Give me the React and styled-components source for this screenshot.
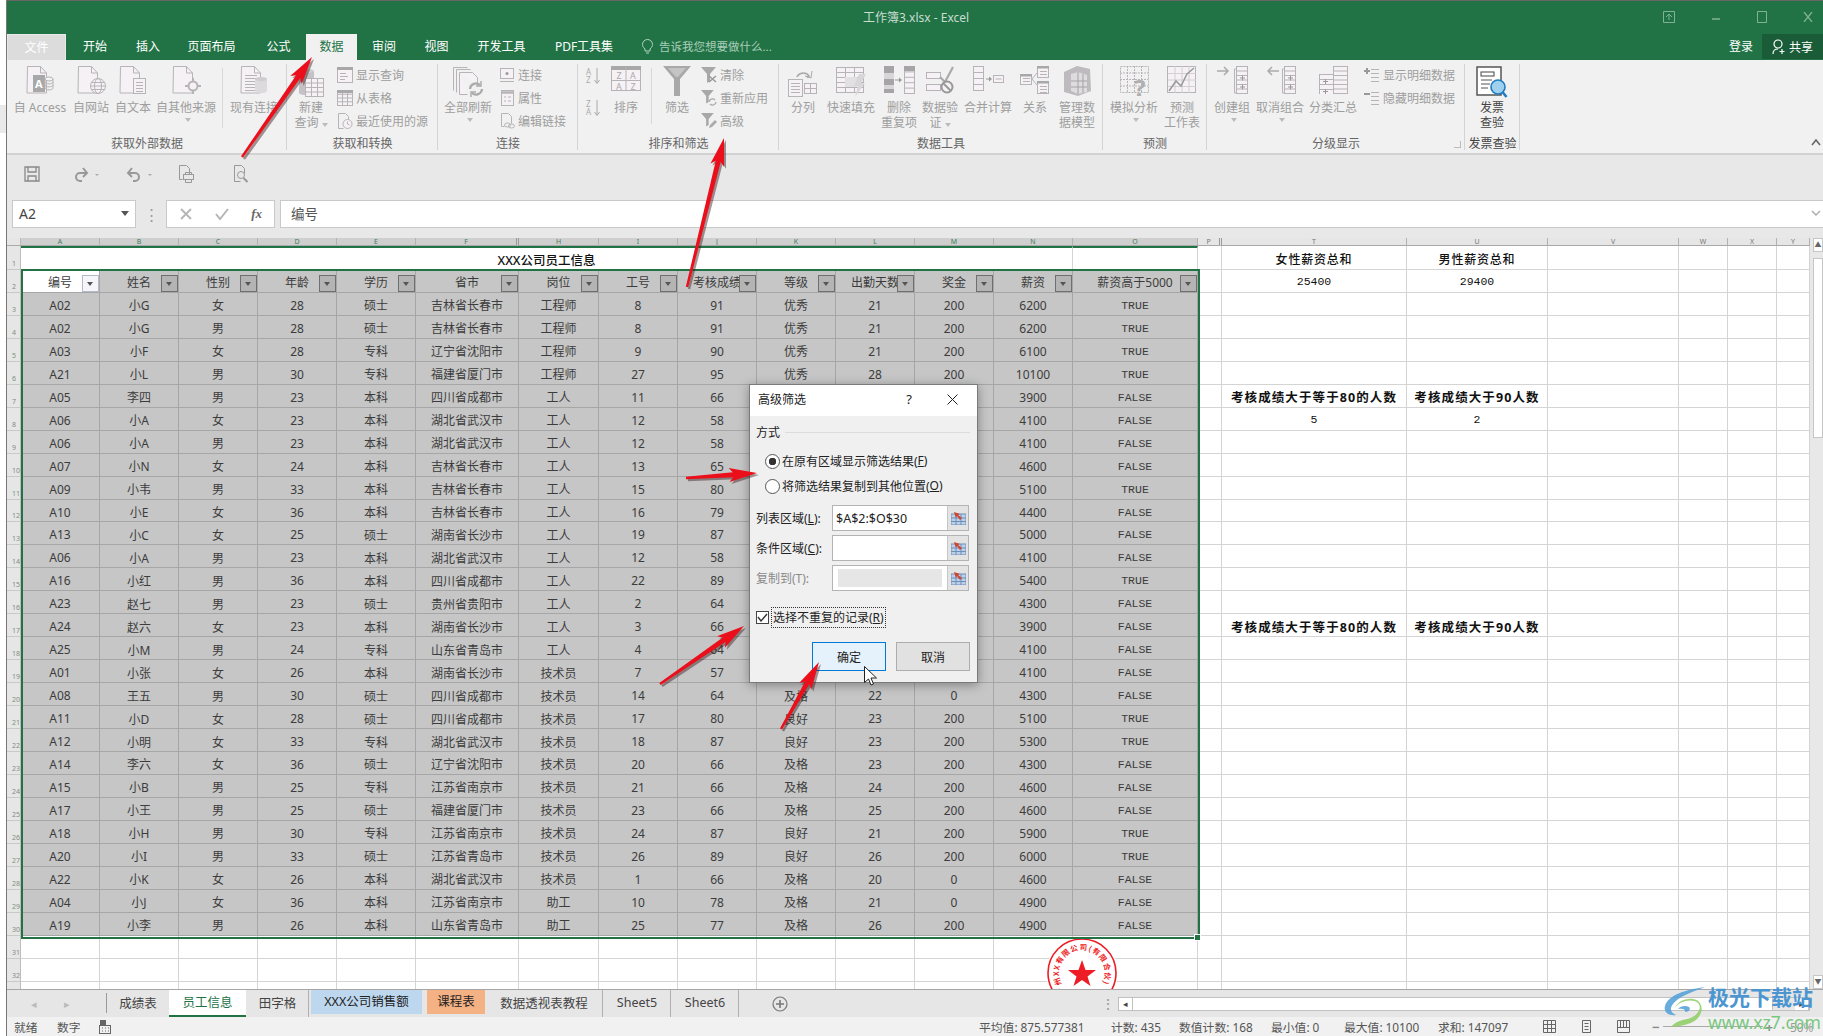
import React from 'react';
import styled, { createGlobalStyle } from 'styled-components';

const G = '#b7b4b7';
const F = '#f5f1f5';
const D = '#a8a8a8';
const FONT = '"Noto Sans", "Noto Sans CJK SC", sans-serif';

const GlobalStyle = createGlobalStyle`
  html, body { margin: 0; padding: 0; background: #fff; }
  body { font-family: ${FONT}; font-size: 12px; overflow: hidden; }
  * { box-sizing: border-box; }
`;

/* ---------- small drawing helpers ---------- */
const Ico = ({ w = 28, h = 28, children }) => (
  <svg width={w} height={h} viewBox={`0 0 ${w} ${h}`} fill="none" stroke={G} strokeWidth="1">
    {children}
  </svg>
);
const Doc = () => (
  <>
    <path d="M1.5 .5h13l6 6.5v20h-19.500z" fill={F} />
    <path d="M14.500 .5v6.500h6" />
  </>
);
const Cyl = ({ x, y, w = 9, h = 13, fill = '#dcdadc' }) => (
  <>
    <rect x={x} y={y} width={w} height={h} fill={fill} stroke="none" />
    <ellipse cx={x + w / 2} cy={y} rx={w / 2} ry="2" fill="#cfcdcf" stroke="none" />
    <ellipse cx={x + w / 2} cy={y + h} rx={w / 2} ry="2" fill={fill} stroke="none" />
  </>
);
const Lines = ({ x, y, w, n, step = 3 }) => (
  <path d={Array.from({ length: n }, (_, i) => `M${x} ${y + i * step + 0.5}h${w}`).join('')} />
);
const Table = ({ x, y, c = 2, r = 4, cw = 6, rh = 4, fill = F }) => (
  <>
    <rect x={x + 0.5} y={y + 0.5} width={c * cw} height={r * rh} fill={fill} />
    {Array.from({ length: c - 1 }, (_, i) => (
      <path key={`c${i}`} d={`M${x + 0.5 + cw * (i + 1)} ${y}v${r * rh}`} />
    ))}
    {Array.from({ length: r - 1 }, (_, i) => (
      <path key={`r${i}`} d={`M${x} ${y + 0.5 + rh * (i + 1)}h${c * cw}`} />
    ))}
  </>
);
const Funnel = ({ s = 1 }) => (
  <polygon points={`0,0 ${15 * s},0 ${9 * s},${7 * s} ${9 * s},${14 * s} ${6 * s},${16 * s} ${6 * s},${7 * s}`} fill={D} stroke="none" />
);

const AccessIcon = () => (
  <Ico>
    <Doc />
    <rect x="7" y="9" width="12" height="17" fill={D} stroke="none" />
    <text x="9" y="22" fontSize="11" fontWeight="700" fill="#fff" stroke="none" fontFamily="Noto Sans">A</text>
    <ellipse cx="23" cy="13" rx="4" ry="2" fill={F} />
    <path d="M19 13v9c0 2.500 8 2.500 8 0v-9M19 16c0 2.500 8 2.500 8 0M19 19c0 2.500 8 2.500 8 0" />
  </Ico>
);
const WebIcon = () => (
  <Ico w={29}>
    <Doc />
    <circle cx="21" cy="20" r="7.500" fill={F} />
    <ellipse cx="21" cy="20" rx="3.500" ry="7.500" />
    <path d="M13.500 20h15M14.500 16.500h13M14.500 23.500h13" />
  </Ico>
);
const TextIcon = () => (
  <Ico>
    <Doc />
    <rect x="14.500" y="12.500" width="12" height="15" fill={F} />
    <Lines x={17} y={16} w={7} n={4} />
  </Ico>
);
const OtherIcon = () => (
  <Ico w={29}>
    <Doc />
    <path d="M21 12v16M13 20h16" strokeWidth="2" />
    <circle cx="21" cy="20" r="4.500" fill={F} strokeWidth="2" />
  </Ico>
);
const ExistIcon = () => (
  <Ico w={29}>
    <Doc />
    <Lines x={5} y={9} w={12} n={6} />
    <Cyl x={15} y={13} w={12} h={12} />
  </Ico>
);
const NewQueryIcon = () => (
  <Ico w={30} h={32}>
    <Cyl x={3} y={5} w={15} h={22} fill="#c4c2c4" />
    <Table x={9} y={12} c={3} r={4} cw={6} rh={4.500} />
  </Ico>
);
const RefreshIcon = () => (
  <Ico w={32} h={32}>
    <path d="M1.500 1.500h14M1.500 1.500v23M4.500 3.500h14M4.500 3.500v23" />
    <path d="M7.500 6.500h13l5 5v8M7.500 6.500v22h8" fill={F} />
    <path d="M18 23a6 6 0 0 1 10-4M30 23a6 6 0 0 1-10 4" stroke="#aaa" strokeWidth="2.200" />
    <path d="M29 15v5h-5M19 31v-5h5" stroke="#aaa" strokeWidth="1.400" />
  </Ico>
);
const SortBigIcon = () => (
  <Ico w={30} h={25}>
    <rect x=".5" y=".5" width="29" height="24" fill={F} />
    <rect x="0" y="0" width="30" height="4" fill={D} stroke="none" />
    <path d="M15 1v24M1 14.500h28" />
    <g fill="#aaa" stroke="none" fontSize="9" fontFamily="Noto Sans" textAnchor="middle">
      <text x="8" y="13">Z</text>
      <text x="22" y="13">A</text>
      <text x="8" y="24">A</text>
      <text x="22" y="24">Z</text>
    </g>
  </Ico>
);
const SortSmall = ({ top, bottom }) => (
  <svg width="15" height="18" viewBox="0 0 15 18" fill="none" stroke="#aaa">
    <g fill="#aaa" stroke="none" fontSize="8" fontFamily="Noto Sans">
      <text x="0" y="8">{top}</text>
      <text x="0" y="16">{bottom}</text>
    </g>
    <path d="M11 1v15M8.500 13l2.500 3.500 2.500-3.500" />
  </svg>
);
const FilterBigIcon = () => (
  <Ico w={28} h={30}>
    <polygon points="0,0 28,0 17,13 17,30 11,30 11,13" fill={D} stroke="none" />
    <polygon points="5,2 23,2 15,11 13,11" fill="#c4c4c4" stroke="none" />
  </Ico>
);
const ClearIcon = () => (
  <Ico w={16} h={16}>
    <Funnel />
    <path d="M8 9l7 6M15 9l-7 6" stroke="#999" strokeWidth="1.500" />
  </Ico>
);
const ReapplyIcon = () => (
  <Ico w={16} h={16}>
    <Funnel s={0.85} />
    <path d="M8 12a3.500 3.500 0 0 1 6-2M15 12a3.500 3.500 0 0 1-6 2" stroke="#aaa" strokeWidth="1.300" />
  </Ico>
);
const AdvancedIcon = () => (
  <Ico w={16} h={16}>
    <Funnel s={0.85} />
    <path d="M8 15l1-3 5-5 2 2-5 5z" fill="#aaa" stroke="none" />
  </Ico>
);
const LinkIcon = () => (
  <Ico w={16} h={16}>
    <rect x="1.500" y="1.500" width="13" height="10" fill={F} />
    <path d="M1 14.500h14" />
    <circle cx="8" cy="6.500" r="1.500" fill="#999" stroke="none" />
  </Ico>
);
const PropIcon = () => (
  <Ico w={16} h={16}>
    <rect x="2.500" y=".5" width="12" height="15" fill={F} />
    <path d="M2 2.500h13" strokeWidth="2.500" />
    <path d="M5 7h2M9 7h3M5 11h2M9 11h3" />
  </Ico>
);
const EditLinkIcon = () => (
  <Ico w={16} h={16}>
    <path d="M2.500 .5h7l3 3v7M2.500 .5v13h3" />
    <ellipse cx="8.500" cy="12" rx="3" ry="2" />
    <ellipse cx="12.500" cy="13" rx="3" ry="2" />
  </Ico>
);
const ShowQueryIcon = () => (
  <Ico w={16} h={16}>
    <rect x=".5" y=".5" width="15" height="15" fill={F} />
    <rect x="0" y="0" width="16" height="3" fill={D} stroke="none" />
    <path d="M3 6.500h6M3 9.500h8M3 12.500h5" />
  </Ico>
);
const FromTableIcon = () => (
  <Ico w={16} h={16}>
    <Table x={0} y={0} c={3} r={4} cw={5} rh={3.750} />
    <rect x="0" y="0" width="16" height="3" fill={D} stroke="none" />
  </Ico>
);
const RecentIcon = () => (
  <Ico w={16} h={16}>
    <path d="M1.500 .5h7l3 3v5M1.500 .5v15h5" />
    <circle cx="10.500" cy="11" r="4.500" fill={F} />
    <path d="M10.500 8.500v2.500l2 1" />
  </Ico>
);
const SplitIcon = () => (
  <Ico w={30} h={32}>
    <path d="M9 11a7 7 0 0 1 12-1l-2 1.500" stroke="#aaa" strokeWidth="1.600" />
    <path d="M24 5l-1 7-6-2" stroke="#aaa" strokeWidth="1" />
    <rect x=".5" y="13.500" width="14" height="17" fill={F} />
    <Lines x={3} y={17} w={9} n={4} />
    <rect x="16.500" y="17.500" width="12" height="10" fill={F} />
    <path d="M22.500 18v9M17 22.500h11" />
  </Ico>
);
const FlashIcon = () => (
  <Ico w={32} h={32}>
    <Table x={1} y={1} c={3} r={5} cw={9} rh={5} fill="#f5f1f5" />
    <rect x="10" y="11" width="12" height="10" fill="#e2e0e2" stroke="none" />
    <polygon points="24,8 31,8 26,17 30,17 20,31 23,20 19,20" fill="#d8d6d8" stroke="none" />
  </Ico>
);
const DedupIcon = () => (
  <Ico w={32} h={28}>
    <rect x="1" y="0" width="10" height="27" fill="#a6a4a6" stroke="none" />
    <rect x="1" y="7" width="10" height="6" fill="#d8d6d8" stroke="none" />
    <rect x="1" y="19" width="10" height="4" fill="#d8d6d8" stroke="none" />
    <Table x={21} y={0} c={1} r={5} cw={10} rh={5.400} />
    <rect x="21" y="0" width="11" height="5" fill="#a6a4a6" stroke="none" />
    <path d="M12 14h6" stroke="#999" />
    <path d="M16 11.500l3 2.500-3 2.500z" fill="#999" stroke="none" />
  </Ico>
);
const ValidIcon = () => (
  <Ico w={28} h={28}>
    <rect x=".5" y="6.500" width="14" height="6" fill={F} />
    <rect x=".5" y="18.500" width="14" height="6" fill={F} />
    <path d="M14 11l5 5L27 1" stroke="#aaa" strokeWidth="2.200" />
    <circle cx="21" cy="21" r="5.500" stroke="#999" strokeWidth="2" fill={F} />
    <path d="M17 17l8 8" stroke="#999" strokeWidth="2" />
  </Ico>
);
const MergeIcon = () => (
  <Ico w={32} h={26}>
    <Table x={1} y={0} c={1} r={4} cw={10} rh={6} />
    <path d="M14 13h5" stroke="#999" />
    <path d="M17 10.500l3 2.500-3 2.500z" fill="#999" stroke="none" />
    <rect x="21.500" y="9.500" width="10" height="7" fill={F} />
    <path d="M23.500 13h6" />
  </Ico>
);
const RelationIcon = () => (
  <Ico w={30} h={28}>
    <rect x="17.500" y=".5" width="11" height="11" fill={F} />
    <rect x="17" y="0" width="12" height="2.500" fill={D} stroke="none" />
    <Lines x={20} y={5} w={7} n={2} />
    <rect x=".5" y="8.500" width="11" height="10" fill={F} />
    <rect x="0" y="8" width="12" height="2.500" fill={D} stroke="none" />
    <Lines x={3} y={12} w={7} n={2} />
    <rect x="17.500" y="15.500" width="11" height="12" fill={F} />
    <rect x="17" y="15" width="12" height="2.500" fill={D} stroke="none" />
    <Lines x={20} y={20} w={7} n={3} />
    <path d="M17 7l-5 6 5 6" />
  </Ico>
);
const ModelIcon = () => (
  <Ico w={30} h={30}>
    <path d="M2 6l13-6 13 3 1 22-13 5-14-4z" fill="#bdbbbd" stroke="none" />
    <path d="M9 8l7-2 9 3v17l-9 2-7-3z" fill="#dedcde" stroke="none" />
    <path d="M16 6v22M9 15h16M9 21h16M21 8v19" stroke="#a4a4a4" />
  </Ico>
);
const WhatIfIcon = () => (
  <Ico w={30} h={30}>
    <g strokeDasharray="2 1">
      <Table x={1} y={0} c={4} r={4} cw={7} rh={6.500} fill="none" />
    </g>
    <text x="15" y="31" fontSize="24" fontWeight="700" fill="#b0aeb0" stroke="none" fontFamily="Noto Sans">?</text>
  </Ico>
);
const ForecastIcon = () => (
  <Ico w={30} h={28}>
    <rect x=".5" y=".5" width="28" height="26" fill={F} />
    <path d="M1 7.500h28M1 14h28M1 20.500h28M8 0v27M15 0v27M22 0v27" stroke="#d2d0d2" />
    <path d="M2 25l7-10 5 5 6-12 7-6" stroke="#999" strokeWidth="1.500" />
  </Ico>
);
const OutlineIcon = ({ arrow }) => (
  <Ico w={32} h={28}>
    <path d="M18.500 3h12M18.500 3v24h12" />
    <Table x={20} y={0} c={1} r={6} cw={11} rh={4.500} />
    <path d="M24 12h5M26.500 9.500v5M24 21h5M26.500 18.500v5" stroke="#999" />
    {arrow === 'in' && <path d="M1 5h11M8 1l4 4-4 4" stroke="#aaa" strokeWidth="1.500" />}
    {arrow === 'out' && <path d="M15 5H4M8 1L4 5l4 4" stroke="#aaa" strokeWidth="1.500" />}
  </Ico>
);
const SubtotalIcon = () => (
  <Ico w={30} h={28}>
    <Table x={1} y={8} c={2} r={4} cw={14} rh={5} />
    <Table x={15} y={0} c={1} r={6} cw={14} rh={4.500} />
    <path d="M5 15.500h5M7.500 13v5M5 25.500h5M7.500 23v5" stroke="#999" />
  </Ico>
);
const DetailIcon = ({ plus }) => (
  <Ico w={16} h={18}>
    <Lines x={7} y={3} w={8} n={4} step={4} />
    <path d={plus ? 'M0 5h6M3 2v6' : 'M0 5h6'} stroke="#999" strokeWidth="2" />
  </Ico>
);
const InvoiceIcon = () => (
  <svg width="32" height="32" viewBox="0 0 32 32" fill="none" stroke="#555">
    <rect x="1" y="1" width="24" height="28" fill="#fff" strokeWidth="1.500" />
    <rect x="5" y="6" width="13" height="4" stroke="#444" />
    <path d="M5 14h11M5 18h9M5 22h7" stroke="#555" />
    <circle cx="22" cy="21" r="7" fill="#9fd0ee" stroke="#1f7cc0" strokeWidth="1.600" />
    <path d="M26.500 26l4 5" stroke="#1f7cc0" strokeWidth="2.500" />
  </svg>
);

/* ---------- data ---------- */
const TABS = [
  ['开始', 58], ['插入', 48], ['页面布局', 79], ['公式', 55], ['数据', 51, true],
  ['审阅', 54], ['视图', 51], ['开发工具', 79], ['PDF工具集', 86],
];

const COLUMNS = [
  ['A', 79], ['B', 79], ['C', 79], ['D', 79], ['E', 79], ['F', 103], ['H', 80], ['I', 79],
  ['J', 79], ['K', 79], ['L', 79], ['M', 79], ['N', 79], ['O', 125], ['P', 24], ['T', 185],
  ['U', 141], ['V', 131], ['W', 49], ['X', 49], ['Y', 33],
];
const HEADERS = ['编号', '姓名', '性别', '年龄', '学历', '省市', '岗位', '工号', '考核成绩', '等级', '出勤天数', '奖金', '薪资', '薪资高于5000'];

const ROWS = [
  'A02 小G 女 28 硕士 吉林省长春市 工程师 8 91 优秀 21 200 6200 TRUE',
  'A02 小G 男 28 硕士 吉林省长春市 工程师 8 91 优秀 21 200 6200 TRUE',
  'A03 小F 女 28 专科 辽宁省沈阳市 工程师 9 90 优秀 21 200 6100 TRUE',
  'A21 小L 男 30 专科 福建省厦门市 工程师 27 95 优秀 28 200 10100 TRUE',
  'A05 李四 男 23 本科 四川省成都市 工人 11 66 及格 22 0 3900 FALSE',
  'A06 小A 女 23 本科 湖北省武汉市 工人 12 58 不及格 21 0 4100 FALSE',
  'A06 小A 男 23 本科 湖北省武汉市 工人 12 58 不及格 21 0 4100 FALSE',
  'A07 小N 女 24 本科 吉林省长春市 工人 13 65 及格 23 200 4600 FALSE',
  'A09 小韦 男 33 本科 吉林省长春市 工人 15 80 良好 24 200 5100 TRUE',
  'A10 小E 女 36 本科 吉林省长春市 工人 16 79 及格 22 200 4400 FALSE',
  'A13 小C 女 25 硕士 湖南省长沙市 工人 19 87 良好 25 200 5000 FALSE',
  'A06 小A 男 23 本科 湖北省武汉市 工人 12 58 不及格 21 0 4100 FALSE',
  'A16 小红 男 36 本科 四川省成都市 工人 22 89 良好 26 200 5400 TRUE',
  'A23 赵七 男 23 硕士 贵州省贵阳市 工人 2 64 及格 22 0 4300 FALSE',
  'A24 赵六 女 23 本科 湖南省长沙市 工人 3 66 及格 21 0 3900 FALSE',
  'A25 小M 男 24 专科 山东省青岛市 工人 4 64 及格 22 200 4100 FALSE',
  'A01 小张 女 26 本科 湖南省长沙市 技术员 7 57 不及格 22 0 4100 FALSE',
  'A08 王五 男 30 硕士 四川省成都市 技术员 14 64 及格 22 0 4300 FALSE',
  'A11 小D 女 28 硕士 四川省成都市 技术员 17 80 良好 23 200 5100 TRUE',
  'A12 小明 女 33 专科 湖北省武汉市 技术员 18 87 良好 23 200 5300 TRUE',
  'A14 李六 女 36 硕士 辽宁省沈阳市 技术员 20 66 及格 23 200 4300 FALSE',
  'A15 小B 男 25 专科 江苏省南京市 技术员 21 66 及格 24 200 4600 FALSE',
  'A17 小王 男 25 硕士 福建省厦门市 技术员 23 66 及格 25 200 4600 FALSE',
  'A18 小H 男 30 专科 江苏省南京市 技术员 24 87 良好 21 200 5900 TRUE',
  'A20 小I 男 33 硕士 江苏省青岛市 技术员 26 89 良好 26 200 6000 TRUE',
  'A22 小K 女 26 本科 湖北省武汉市 技术员 1 66 及格 20 0 4600 FALSE',
  'A04 小J 女 36 本科 江苏省南京市 助工 10 78 及格 21 0 4900 FALSE',
  'A19 小李 男 26 本科 山东省青岛市 助工 25 77 及格 26 200 4900 FALSE',
].map(r => r.split(' '));

const SIDE = {
  1: ['女性薪资总和', '男性薪资总和', 'head'],
  2: ['25400', '29400', 'num'],
  7: ['考核成绩大于等于80的人数', '考核成绩大于90人数', 'bold'],
  8: ['5', '2', 'num'],
  17: ['考核成绩大于等于80的人数', '考核成绩大于90人数', 'bold'],
};

const SHEETS = [
  { name: '成绩表', w: 62 },
  { name: '员工信息', w: 77, active: true },
  { name: '田字格', w: 63, sep: true },
  { name: 'XXX公司销售额', w: 111, color: '#bdd7ee', gap: 2 },
  { name: '课程表', w: 58, color: '#f4b183', gap: 5 },
  { name: '数据透视表教程', w: 118, sep: true },
  { name: 'Sheet5', w: 68, sep: true },
  { name: 'Sheet6', w: 68, sep: true },
];

const STATS = [
  ['平均值: 875.577381', 132], ['计数: 435', 68], ['数值计数: 168', 92],
  ['最小值: 0', 73], ['最大值: 10100', 94], ['求和: 147097', 105],
];

/* ---------- arrows ---------- */
const arrowPoints = ([x1, y1], [x2, y2], dx = 0) => {
  const len = Math.hypot(x2 - x1, y2 - y1);
  const ux = (x2 - x1) / len;
  const uy = (y2 - y1) / len;
  const at = (d, n) => `${x1 + ux * d - uy * n + dx},${y1 + uy * d + ux * n + dx}`;
  const b = len - 24;
  return [at(0, -1.200), at(b, -2.500), at(b - 4, -7), at(len, 0), at(b - 4, 7), at(b, 2.500), at(0, 1.200)].join(' ');
};
const ARROWS = [
  [[242, 157], [312, 57]],
  [[687, 287], [724, 138]],
  [[686, 478], [757, 473]],
  [[660, 684], [744, 626]],
  [[781, 729], [819, 662]],
];

/* ---------- components ---------- */
const RefPick = () => (
  <svg width="15" height="13" viewBox="0 0 15 13">
    <rect x="0" y="2" width="15" height="11" fill="#bcd0ea" stroke="#6f8fb8" />
    <path d="M0 6h15M0 9.500h15M5 2v11M10 2v11" stroke="#6f8fb8" />
    <path d="M3 0l6 2-2 1 4 3-2 2-3-4-1 2z" fill="#d0432a" />
  </svg>
);

const BigBtn = ({ w, icon, label, caret, dark }) => (
  <BigButton $w={w} $dark={dark}>
    <IconSlot>{icon}</IconSlot>
    {label.map((l, i) => (
      <span key={l}>
        {l}
        {caret === 'inline' && i === label.length - 1 && <Caret />}
      </span>
    ))}
    {caret === 'below' && <Caret />}
  </BigButton>
);

const Small = ({ icon, children }) => (
  <SmallRow>
    <SmallIcon>{icon}</SmallIcon>
    {children}
  </SmallRow>
);

const Group = ({ $w, $pad, label, dark, launcher, children }) => (
  <GroupBox $w={$w}>
    <GroupBody $pad={$pad}>{children}</GroupBody>
    <GroupLabel $dark={dark}>
      {label}
      {launcher && <Launcher />}
    </GroupLabel>
  </GroupBox>
);

const Ribbon = () => (
  <RibbonBar>
    <Group $w={280} $pad={3} label="获取外部数据">
      <BigBtn w={60} icon={<AccessIcon />} label={['自 Access']} />
      <BigBtn w={42} icon={<WebIcon />} label={['自网站']} />
      <BigBtn w={42} icon={<TextIcon />} label={['自文本']} />
      <BigBtn w={64} icon={<OtherIcon />} label={['自其他来源']} caret="below" />
      <GroupRule $l={4} $r={5} />
      <BigBtn w={52} icon={<ExistIcon />} label={['现有连接']} />
    </Group>
    <Group $w={151} $pad={2} label="获取和转换">
      <BigBtn w={44} icon={<NewQueryIcon />} label={['新建', '查询']} caret="inline" />
      <SmallCol $left={4}>
        <Small icon={<ShowQueryIcon />}>显示查询</Small>
        <Small icon={<FromTableIcon />}>从表格</Small>
        <Small icon={<RecentIcon />}>最近使用的源</Small>
      </SmallCol>
    </Group>
    <Group $w={140} $pad={4} label="连接">
      <BigBtn w={52} icon={<RefreshIcon />} label={['全部刷新']} caret="below" />
      <SmallCol $left={5}>
        <Small icon={<LinkIcon />}>连接</Small>
        <Small icon={<PropIcon />}>属性</Small>
        <Small icon={<EditLinkIcon />}>编辑链接</Small>
      </SmallCol>
    </Group>
    <Group $w={201} $pad={8} label="排序和筛选">
      <SortCol>
        <SortSmall top="A" bottom="Z" />
        <SortSmall top="Z" bottom="A" />
      </SortCol>
      <BigBtn w={44} icon={<SortBigIcon />} label={['排序']} />
      <GroupRule $h={56} $l={3} $r={3} />
      <BigBtn w={44} icon={<FilterBigIcon />} label={['筛选']} />
      <SmallCol $left={2}>
        <Small icon={<ClearIcon />}>清除</Small>
        <Small icon={<ReapplyIcon />}>重新应用</Small>
        <Small icon={<AdvancedIcon />}>高级</Small>
      </SmallCol>
    </Group>
    <Group $w={324} $pad={2} label="数据工具">
      <BigBtn w={44} icon={<SplitIcon />} label={['分列']} />
      <BigBtn w={52} icon={<FlashIcon />} label={['快速填充']} />
      <BigBtn w={44} icon={<DedupIcon />} label={['删除', '重复项']} />
      <BigBtn w={38} icon={<ValidIcon />} label={['数据验', '证']} caret="inline" />
      <BigBtn w={58} icon={<MergeIcon />} label={['合并计算']} />
      <BigBtn w={36} icon={<RelationIcon />} label={['关系']} />
      <BigBtn w={48} icon={<ModelIcon />} label={['管理数', '据模型']} />
    </Group>
    <Group $w={104} $pad={5} label="预测">
      <BigBtn w={52} icon={<WhatIfIcon />} label={['模拟分析']} caret="below" />
      <BigBtn w={44} icon={<ForecastIcon />} label={['预测', '工作表']} />
    </Group>
    <Group $w={258} $pad={3} label="分级显示" launcher>
      <BigBtn w={44} icon={<OutlineIcon arrow="in" />} label={['创建组']} caret="below" />
      <BigBtn w={52} icon={<OutlineIcon arrow="out" />} label={['取消组合']} caret="below" />
      <BigBtn w={54} icon={<SubtotalIcon />} label={['分类汇总']} />
      <SmallCol $left={4}>
        <Small icon={<DetailIcon plus />}>显示明细数据</Small>
        <Small icon={<DetailIcon />}>隐藏明细数据</Small>
      </SmallCol>
    </Group>
    <Group $w={55} $pad={0} label="发票查验" dark>
      <BigBtn w={54} icon={<InvoiceIcon />} label={['发票', '查验']} dark />
    </Group>
    <Collapse>
      <svg width="10" height="8" viewBox="0 0 10 8" fill="none" stroke="#666" strokeWidth="1.600">
        <path d="M1 7l4-5 4 5" />
      </svg>
    </Collapse>
  </RibbonBar>
);

const Qat = () => (
  <QatBar>
    <QatIcon $w={50}>
      <svg width="16" height="16" viewBox="0 0 16 16" fill="none" stroke="#888" strokeWidth="1.300">
        <path d="M1 1h14v14H1z" />
        <path d="M4 1v5h8V1M4 15v-5h8v5" />
      </svg>
    </QatIcon>
    <QatIcon $w={58}>
      <svg width="26" height="16" viewBox="0 0 26 16" fill="none" stroke="#999" strokeWidth="2">
        <path d="M13 7H7a4 4 0 0 0 0 8h2" />
        <path d="M10 2l4 5-4 4" />
        <path d="M22 8l2 2 2-2z" fill="#aaa" stroke="none" />
      </svg>
    </QatIcon>
    <QatIcon $w={48}>
      <svg width="26" height="16" viewBox="0 0 26 16" fill="none" stroke="#999" strokeWidth="2">
        <path d="M3 7h6a4 4 0 0 1 0 8H7" />
        <path d="M6 2L2 7l4 4" />
        <path d="M22 8l2 2 2-2z" fill="#aaa" stroke="none" />
      </svg>
    </QatIcon>
    <QatIcon $w={46}>
      <svg width="16" height="18" viewBox="0 0 16 18" fill="none" stroke="#999">
        <path d="M1.500 .5h7l3 3v6M1.500 .5v14h3" />
        <rect x="5.500" y="9.500" width="10" height="5" />
        <path d="M7.500 9.500v-2h6v2M7.500 14.500v3h6v-3" />
      </svg>
    </QatIcon>
    <QatIcon $w={64}>
      <svg width="16" height="18" viewBox="0 0 16 18" fill="none" stroke="#999">
        <path d="M1.500 .5h7l3 3v5M1.500 .5v16h6" />
        <circle cx="8" cy="10" r="3.500" />
        <path d="M10.500 13l4 4" strokeWidth="2" />
      </svg>
    </QatIcon>
  </QatBar>
);

const FormulaRow = () => (
  <FormulaWrap>
    <NameBox>
      A2
      <DownMark />
    </NameBox>
    <Dots>⋮</Dots>
    <FxBox>
      <svg width="12" height="12" viewBox="0 0 12 12" stroke="#b5b5b5" strokeWidth="1.800"><path d="M1 1l10 10M11 1L1 11" /></svg>
      <svg width="14" height="12" viewBox="0 0 14 12" fill="none" stroke="#b5b5b5" strokeWidth="2"><path d="M1 6l4 5 8-10" /></svg>
      <FxMark>fx</FxMark>
    </FxBox>
    <FormulaInput>
      编号
      <svg width="10" height="7" viewBox="0 0 10 7" fill="none" stroke="#aaa" strokeWidth="1.400"><path d="M1 1l4 4 4-4" /></svg>
    </FormulaInput>
  </FormulaWrap>
);

const Stamp = () => (
  <StampBox>
    <svg width="74" height="74" viewBox="0 0 74 74">
      <circle cx="37" cy="37" r="36" fill="#fff" />
      <circle cx="37" cy="37" r="34" fill="none" stroke="#ee1c25" strokeWidth="1.600" />
      <defs>
        <path id="stampArc" d="M22.200 54.600A23 23 0 1 1 51.800 54.600" />
      </defs>
      <text fontSize="7.500" fontWeight="700" fill="#ee1c25" fontFamily="Noto Sans CJK SC">
        <textPath href="#stampArc" textLength="102">广州XX有限公司(有限合伙)</textPath>
      </text>
      <polygon points="37,24 40.500,34 51,34 42.500,40.500 45.500,50 37,44 28.500,50 31.500,40.500 23,34 33.500,34" fill="#ee1c25" />
    </svg>
  </StampBox>
);

const Sheet = () => (
  <SheetWrap>
    <Grid>
      <Corner />
      {COLUMNS.map(([c], i) => (
        <ColHead key={c} $sel={i < 14} $double={c === 'F' || c === 'P'}>{c}</ColHead>
      ))}
      <RowHead>1</RowHead>
      <TitleCell>XXX公司员工信息</TitleCell>
      <TitleEnd />
      <Blank />
      <SideCell $kind="head">{SIDE[1][0]}</SideCell>
      <SideCell $kind="head">{SIDE[1][1]}</SideCell>
      <Blank /><Blank /><Blank /><Blank />
      <RowHead>2</RowHead>
      {HEADERS.map((h, i) => (
        <DataCell key={h} $active={i === 0}>
          {h}
          <FilterBtn $active={i === 0} />
        </DataCell>
      ))}
      <Blank />
      <SideCell $kind="num">{SIDE[2][0]}</SideCell>
      <SideCell $kind="num">{SIDE[2][1]}</SideCell>
      <Blank /><Blank /><Blank /><Blank />
      {ROWS.map((row, r) => {
        const n = r + 3;
        const side = SIDE[n];
        return (
          <React.Fragment key={n}>
            <RowHead>{n}</RowHead>
            {row.map((v, c) => (
              <DataCell key={c} $mono={c === 13}>{v}</DataCell>
            ))}
            <Blank />
            <SideCell $kind={side && side[2]}>{side && side[0]}</SideCell>
            <SideCell $kind={side && side[2]}>{side && side[1]}</SideCell>
            <Blank /><Blank /><Blank /><Blank />
          </React.Fragment>
        );
      })}
      {[31, 32, 33].map(n => (
        <React.Fragment key={n}>
          <RowHead>{n}</RowHead>
          {COLUMNS.map(([c]) => <Blank key={c} />)}
        </React.Fragment>
      ))}
      <Stamp />
      <Selection />
      <FillHandle />
    </Grid>
    <VScroll>
      <ScrollArrow>▲</ScrollArrow>
      <VThumb />
      <ScrollArrow>▼</ScrollArrow>
    </VScroll>
  </SheetWrap>
);

const TabBar = () => (
  <SheetBar>
    <SheetNav>
      <span>◂</span>
      <span>▸</span>
    </SheetNav>
    {SHEETS.map(s => (
      <SheetTab key={s.name} $w={s.w} $active={s.active} $color={s.color} $gap={s.gap} $sep={s.sep}>
        {s.name}
      </SheetTab>
    ))}
    <AddSheet>
      <svg width="16" height="16" viewBox="0 0 16 16" fill="none" stroke="#777" strokeWidth="1.200">
        <circle cx="8" cy="8" r="7" />
        <path d="M8 4v8M4 8h8" strokeWidth="1.600" />
      </svg>
    </AddSheet>
    <BarDots>⋮</BarDots>
    <HScroll>
      <HEnd>◂</HEnd>
      <HThumb />
      <HEnd>▸</HEnd>
    </HScroll>
  </SheetBar>
);

const Status = () => (
  <StatusBar>
    <StatusText $w={43}>就绪</StatusText>
    <StatusText $w={42}>数字</StatusText>
    <svg width="12" height="14" viewBox="0 0 12 14" fill="none" stroke="#666">
      <rect x="1" y="0" width="6" height="5" fill="#666" stroke="none" />
      <rect x=".5" y="5.500" width="11" height="8" />
      <path d="M3 8h1M6 8h1M9 8h1M3 11h1M6 11h1M9 11h1" />
    </svg>
    <StatList>
      {STATS.map(([t, w]) => <StatusText key={t} $w={w}>{t}</StatusText>)}
    </StatList>
    <ViewIcons>
      <svg width="13" height="13" viewBox="0 0 13 13" fill="none" stroke="#666"><path d="M.5 .5h12v12H.5zM4.500 .5v12M8.500 .5v12M.5 4.500h12M.5 8.500h12" /></svg>
      <svg width="13" height="13" viewBox="0 0 13 13" fill="none" stroke="#666"><path d="M2.500 .5h8v12h-8zM4.500 3.500h4M4.500 6.500h4M4.500 9.500h4" /></svg>
      <svg width="13" height="13" viewBox="0 0 13 13" fill="none" stroke="#666"><path d="M.5 .5h12v12H.5zM6.500 .5v7M.5 7.500h12M3.500 .5v7M9.500 .5v7" /></svg>
    </ViewIcons>
    <ZoomBox>
      <b>−</b>
      <ZoomTrack />
      <b>+</b>
      <ZoomPct>50%</ZoomPct>
    </ZoomBox>
  </StatusBar>
);

const Dialog = () => (
  <DialogBox>
    <DialogTitle>
      高级筛选
      <TitleHelp>?</TitleHelp>
      <svg width="11" height="11" viewBox="0 0 11 11" stroke="#222" strokeWidth="1"><path d="M.5 .5l10 10M10.500 .5l-10 10" /></svg>
    </DialogTitle>
    <DialogBody>
      <Legend>方式</Legend>
      <RadioRow $checked>在原有区域显示筛选结果(<u>F</u>)</RadioRow>
      <RadioRow>将筛选结果复制到其他位置(<u>O</u>)</RadioRow>
      <Fields>
        <FieldRow>
          <FieldLabel>列表区域(<u>L</u>):</FieldLabel>
          <FieldInput>
            <FieldValue>$A$2:$O$30</FieldValue>
            <RefButton><RefPick /></RefButton>
          </FieldInput>
        </FieldRow>
        <FieldRow>
          <FieldLabel>条件区域(<u>C</u>):</FieldLabel>
          <FieldInput>
            <FieldValue />
            <RefButton><RefPick /></RefButton>
          </FieldInput>
        </FieldRow>
        <FieldRow>
          <FieldLabel $off>复制到(T):</FieldLabel>
          <FieldInput>
            <FieldValue $off />
            <RefButton><RefPick /></RefButton>
          </FieldInput>
        </FieldRow>
      </Fields>
      <CheckRow>
        <CheckBox>
          <svg width="11" height="9" viewBox="0 0 11 9" fill="none" stroke="#333" strokeWidth="1.400"><path d="M1 4l3 4 6-7" /></svg>
        </CheckBox>
        <CheckLabel>选择不重复的记录(<u>R</u>)</CheckLabel>
      </CheckRow>
      <DialogButtons>
        <DialogButton $primary>确定</DialogButton>
        <DialogButton>取消</DialogButton>
      </DialogButtons>
    </DialogBody>
    <Pointer>
      <svg width="13" height="20" viewBox="0 0 13 20">
        <path d="M.5 .5v16l4-3.500 2.500 6 2.500-1-2.500-6h5.500z" fill="#fff" stroke="#222" />
      </svg>
    </Pointer>
  </DialogBox>
);

const Watermark = () => (
  <Mark>
    <svg width="42" height="42" viewBox="0 0 42 42" fill="none">
      <path d="M41 1C22 4 5 8 1 20c-2 7 5 10 11 9-5-2-7-6-3-11C14 11 28 6 41 1z" fill="#4f9fd8" opacity=".85" />
      <path d="M11 22c4-7 17-10 23-5 5 5-1 14-11 16-6 1-12 3-16 8 5-1 19-1 26-8 8-8 5-19-4-20-8-1-16 3-18 9z" fill="#8ccb62" opacity=".85" />
      <path d="M14 23c2-3 8-4 11-2 2 2 0 5-4 5 1-2-2-4-7-3z" fill="#4f9fd8" opacity=".85" />
    </svg>
    <MarkText>
      <MarkName>极光下载站</MarkName>
      <MarkUrl>www.xz7.com</MarkUrl>
    </MarkText>
  </Mark>
);

export default function App() {
  return (
    <Page>
      <GlobalStyle />
      <Gutter />
      <Excel>
        <TitleBar>
          <BookName>工作簿3.xlsx - Excel</BookName>
          <WinButtons>
            <svg width="12" height="12" viewBox="0 0 12 12" fill="none" stroke="#7fb296"><path d="M.5 .5h11v11H.5zM3 6l3-3 3 3M6 3v6" /></svg>
            <svg width="10" height="10" viewBox="0 0 10 10" stroke="#7fb296" strokeWidth="1.500"><path d="M1 7h8" /></svg>
            <svg width="10" height="12" viewBox="0 0 10 12" fill="none" stroke="#7fb296"><path d="M.5 .5h9v11h-9z" /></svg>
            <svg width="10" height="10" viewBox="0 0 10 10" stroke="#7fb296" strokeWidth="1.300"><path d="M1 0l8 10M9 0L1 10" /></svg>
          </WinButtons>
        </TitleBar>
        <TabStrip>
          <FileTab>文件</FileTab>
          {TABS.map(([t, w, on]) => <Tab key={t} $w={w} $on={on}>{t}</Tab>)}
          <TellMe>
            <svg width="11" height="15" viewBox="0 0 11 15" fill="none" stroke="#b5d5c3"><path d="M3 10C1 8 .5 7 .5 5.500a5 5 0 0 1 10 0C10.500 7 10 8 8 10v2H3zM4 14h3" /></svg>
            告诉我您想要做什么...
          </TellMe>
          <Login>登录</Login>
          <Share>
            <svg width="14" height="16" viewBox="0 0 14 16" fill="none" stroke="#fff" strokeWidth="1.200"><circle cx="6" cy="5" r="4" /><path d="M1 15c0-3 2-5 5-5M10 10v5M7.500 12.500h5" /></svg>
            共享
          </Share>
        </TabStrip>
        <Ribbon />
        <Qat />
        <FormulaRow />
        <Sheet />
        <TabBar />
        <Status />
      </Excel>
      <Dialog />
      <ArrowLayer width="1823" height="1036" viewBox="0 0 1823 1036">
        {ARROWS.map(([a, b]) => (
          <g key={a.join()}>
            <polygon points={arrowPoints(a, b, 2)} fill="#3a1a1a" opacity=".45" />
            <polygon points={arrowPoints(a, b)} fill="#ea0f1b" />
          </g>
        ))}
      </ArrowLayer>
      <Watermark />
    </Page>
  );
}

/* ---------- styles ---------- */
const Page = styled.div`
  position: relative;
  width: 1823px;
  height: 1036px;
  overflow: hidden;
  display: flex;
  background: #fff;
  color: #444;
`;
const Gutter = styled.div`
  width: 6px;
  background: linear-gradient(#fff 105px, #e9e9e9 105px, #e9e9e9 133px, #fff 133px);
  flex: none;
`;
const Excel = styled.div`
  flex: 1;
  min-width: 0;
  display: flex;
  flex-direction: column;
  border-left: 1px solid #777;
`;
const TitleBar = styled.div`
  height: 34px;
  background: #217346;
  border-top: 1px solid #666;
  color: #c9ddd1;
  display: flex;
  align-items: center;
  padding-left: 856px;
`;
const BookName = styled.div`
  font-size: 12px;
  width: 120px;
  margin-top: -1px;
`;
const WinButtons = styled.div`
  margin-left: auto;
  width: 160px;
  padding-right: 10px;
  margin-top: -2px;
  display: flex;
  justify-content: space-between;
  align-items: center;
`;
const TabStrip = styled.div`
  height: 26px;
  background: #217346;
  display: flex;
  align-items: stretch;
  color: #fff;
  padding-bottom: 0;
`;
const FileTab = styled.div`
  width: 59px;
  background: #dcdcdc;
  border: 1px solid #e8e8e8;
  border-bottom: none;
  color: #fff;
  display: flex;
  align-items: center;
  justify-content: center;
  padding-bottom: 2px;
`;
const Tab = styled.div`
  width: ${p => p.$w}px;
  display: flex;
  align-items: center;
  justify-content: center;
  padding-bottom: 2px;
  background: ${p => (p.$on ? '#f1f1f1' : 'transparent')};
  color: ${p => (p.$on ? '#217346' : '#fff')};
`;
const TellMe = styled.div`
  margin-left: 15px;
  display: flex;
  align-items: center;
  gap: 6px;
  color: #a9cdb9;
  font-size: 11.500px;
  padding-bottom: 2px;
`;
const Login = styled.div`
  margin-left: auto;
  display: flex;
  align-items: center;
  margin-right: 9px;
  padding-bottom: 2px;
`;
const Share = styled.div`
  width: 61px;
  height: 25px;
  background: #1a5c38;
  display: flex;
  align-items: center;
  justify-content: center;
  gap: 3px;
`;
const RibbonBar = styled.div`
  height: 95px;
  background: #f1f1f1;
  border-bottom: 2px solid #d2d2d2;
  display: flex;
  position: relative;
`;
const GroupBox = styled.div`
  width: ${p => p.$w}px;
  flex: none;
  display: flex;
  flex-direction: column;
  position: relative;
  &::after {
    content: '';
    position: absolute;
    right: 0;
    top: 4px;
    bottom: 3px;
    width: 1px;
    background: #d4d4d4;
  }
`;
const GroupBody = styled.div`
  flex: 1;
  display: flex;
  padding-left: ${p => p.$pad}px;
  padding-top: 6px;
`;
const GroupLabel = styled.div`
  height: 17px;
  line-height: 16px;
  text-align: center;
  color: ${p => (p.$dark ? '#444' : '#666')};
  font-size: 12px;
  position: relative;
`;
const Launcher = styled.i`
  position: absolute;
  right: 4px;
  top: 5px;
  width: 7px;
  height: 7px;
  border-left: 1px solid #bbb;
  border-top: 1px solid #bbb;
  transform: rotate(180deg);
`;
const BigButton = styled.div`
  width: ${p => p.$w}px;
  flex: none;
  display: flex;
  flex-direction: column;
  align-items: center;
  color: ${p => (p.$dark ? '#444' : '#9e9e9e')};
  line-height: 15px;
  white-space: nowrap;
  font-size: 12px;
  span { display: block; }
`;
const IconSlot = styled.div`
  height: 34px;
  width: 100%;
  display: flex;
  align-items: flex-start;
  justify-content: center;
`;
const Caret = styled.i`
  display: inline-block;
  margin: 3px 0 0 3px;
  vertical-align: middle;
  width: 0;
  height: 0;
  border: 3px solid transparent;
  border-top: 4px solid #bbb;
  border-bottom: none;
`;
const GroupRule = styled.div`
  width: 1px;
  height: ${p => p.$h || 60}px;
  background: #d8d8d8;
  margin: 2px ${p => p.$r}px 0 ${p => p.$l}px;
  flex: none;
`;
const SmallCol = styled.div`
  margin-left: ${p => p.$left}px;
  margin-top: -3px;
  display: flex;
  flex-direction: column;
`;
const SmallRow = styled.div`
  height: 23px;
  display: flex;
  align-items: center;
  gap: 3px;
  color: #9e9e9e;
  white-space: nowrap;
`;
const SmallIcon = styled.div`
  width: 16px;
  height: 18px;
  display: flex;
  align-items: center;
  justify-content: center;
`;
const SortCol = styled.div`
  width: 18px;
  height: 50px;
  margin-top: 1px;
  display: flex;
  flex-direction: column;
  justify-content: space-between;
  flex: none;
`;
const Collapse = styled.div`
  position: absolute;
  right: 2px;
  bottom: 3px;
`;
const QatBar = styled.div`
  height: 45px;
  background: #e8e8e8;
  display: flex;
  align-items: center;
`;
const QatIcon = styled.div`
  width: ${p => p.$w}px;
  display: flex;
  justify-content: center;
  margin-top: -8px;
`;
const FormulaWrap = styled.div`
  height: 38px;
  padding: 0 0 10px 5px;
  background: #e8e8e8;
  display: flex;
  align-items: stretch;
`;
const NameBox = styled.div`
  width: 124px;
  background: #fff;
  border: 1px solid #c9c9c9;
  padding: 0 6px 2px 6px;
  display: flex;
  align-items: center;
  justify-content: space-between;
  font-size: 14px;
  color: #444;
`;
const DownMark = styled.i`
  width: 0;
  height: 0;
  border: 4px solid transparent;
  border-top: 5px solid #555;
  border-bottom: none;
`;
const Dots = styled.div`
  width: 30px;
  display: flex;
  align-items: center;
  justify-content: center;
  color: #999;
  font-size: 15px;
`;
const FxBox = styled.div`
  width: 109px;
  background: #fff;
  border: 1px solid #c9c9c9;
  display: flex;
  align-items: center;
  justify-content: space-between;
  padding: 0 12px 0 13px;
  margin-right: 5px;
`;
const FxMark = styled.span`
  font-family: "Liberation Serif", serif;
  font-style: italic;
  font-weight: 700;
  font-size: 13px;
  color: #666;
`;
const FormulaInput = styled.div`
  flex: 1;
  background: #fff;
  border: 1px solid #c9c9c9;
  border-right: none;
  display: flex;
  align-items: center;
  justify-content: space-between;
  padding: 0 2px 2px 10px;
  font-size: 13.500px;
  color: #555;
`;
const SheetWrap = styled.div`
  height: 751px;
  background: #e8e8e8;
  display: flex;
`;
const Grid = styled.div`
  position: relative;
  width: 1803px;
  height: 751px;
  overflow: hidden;
  background: #fff;
  display: grid;
  grid-template-columns: 14px ${COLUMNS.map(c => `${c[1]}px`).join(' ')};
  grid-template-rows: 8px 24px repeat(32, 22.960px);
`;
const Corner = styled.div`
  background: #e6e6e6;
  border-right: 1px solid #bbb;
  border-bottom: 1px solid #aaa;
`;
const ColHead = styled.div`
  background: ${p => (p.$sel ? '#cfcfcf' : '#e6e6e6')};
  border-right: ${p => (p.$double ? '3px double #9a9a9a' : '1px solid #b2b2b2')};
  border-bottom: 1px solid #a8a8a8;
  font-size: 7px;
  line-height: 8px;
  text-align: center;
  color: ${p => (p.$sel ? '#3f7d5a' : '#777')};
  overflow: hidden;
`;
const RowHead = styled.div`
  background: #e6e6e6;
  border-bottom: 1px solid #c9c9c9;
  border-right: 1px solid #bdbdbd;
  font-size: 7px;
  line-height: 8px;
  padding: 0 0 1px 5px;
  display: flex;
  align-items: flex-end;
  color: #7d8f7d;
  overflow: hidden;
`;
const TitleCell = styled.div`
  grid-column: span 13;
  border-top: 2px solid #217346;
  border-right: 1px solid #d4d4d4;
  display: flex;
  align-items: center;
  justify-content: center;
  padding-top: 1px;
  font-size: 12.500px;
  font-weight: 500;
  color: #111;
`;
const TitleEnd = styled.div`
  border-top: 2px solid #217346;
  border-right: 1px solid #d4d4d4;
`;
const Blank = styled.div`
  border-right: 1px solid #d4d4d4;
  border-bottom: 1px solid #d4d4d4;
`;
const DataCell = styled.div`
  position: relative;
  background: ${p => (p.$active ? '#fff' : '#c6c6c6')};
  border-right: 1px solid #a6a6a6;
  border-bottom: 1px solid #a6a6a6;
  display: flex;
  align-items: center;
  justify-content: center;
  white-space: nowrap;
  overflow: hidden;
  padding-top: 3px;
  color: #3c3c3c;
  font-family: ${p => (p.$mono ? '"Liberation Mono", monospace' : FONT)};
  font-size: ${p => (p.$mono ? '11.500px' : '12px')};
`;
const FilterBtn = styled.i`
  position: absolute;
  right: 0;
  top: 5px;
  width: 17px;
  height: 17px;
  border: 1px solid ${p => (p.$active ? '#b4bac8' : '#6f6f6f')};
  background: ${p => (p.$active ? '#f6f6fa' : '#b4b4b4')};
  &::after {
    content: '';
    position: absolute;
    left: 4px;
    top: 6px;
    border: 3.500px solid transparent;
    border-top: 4px solid #555;
    border-bottom: none;
  }
`;
const SideCell = styled.div`
  border-right: 1px solid #d4d4d4;
  border-bottom: 1px solid #d4d4d4;
  display: flex;
  align-items: center;
  justify-content: center;
  white-space: nowrap;
  color: #111;
  overflow: hidden;
  padding-top: 2px;
  font-family: ${p => (p.$kind === 'num' ? '"Liberation Mono", monospace' : FONT)};
  font-size: ${p => (p.$kind === 'num' ? '11.500px' : p.$kind === 'bold' ? '12.500px' : '12px')};
  font-weight: ${p => (p.$kind === 'bold' ? 700 : p.$kind === 'head' ? 500 : 400)};
  letter-spacing: ${p => (p.$kind === 'bold' ? '1.100px' : p.$kind === 'head' ? '.8px' : 0)};
`;
const Selection = styled.div`
  position: absolute;
  left: 14px;
  top: 31px;
  width: 1179px;
  height: 670px;
  border: 2px solid #217346;
  pointer-events: none;
`;
const FillHandle = styled.div`
  position: absolute;
  left: 1187px;
  top: 696px;
  width: 7px;
  height: 7px;
  background: #217346;
  border: 1px solid #fff;
`;
const StampBox = styled.div`
  position: absolute;
  left: 1038px;
  top: 698px;
  pointer-events: none;
`;
const VScroll = styled.div`
  width: 10px;
  margin-left: 3px;
  display: flex;
  flex-direction: column;
  background: #e8e8e8;
`;
const ScrollArrow = styled.div`
  height: 14px;
  background: #fff;
  border: 1px solid #c6c6c6;
  color: #666;
  font-size: 7px;
  line-height: 12px;
  text-align: center;
  &:last-child { margin-top: auto; }
`;
const VThumb = styled.div`
  height: 180px;
  background: #fff;
  border: 1px solid #c6c6c6;
  margin-top: 6px;
`;
const SheetBar = styled.div`
  height: 28px;
  background: #e6e6e6;
  border-top: 1px solid #a6a6a6;
  display: flex;
  align-items: stretch;
`;
const SheetNav = styled.div`
  width: 100px;
  padding: 0 36px 0 24px;
  display: flex;
  justify-content: space-between;
  align-items: center;
  color: #bbb;
  font-size: 11px;
  border-right: 1px solid #999;
  margin: 3px 0 4px;
`;
const SheetTab = styled.div`
  width: ${p => p.$w}px;
  margin-left: ${p => p.$gap || 0}px;
  flex: none;
  display: flex;
  align-items: center;
  justify-content: center;
  white-space: nowrap;
  padding-bottom: 3px;
  color: ${p => (p.$active ? '#217346' : p.$color ? '#222' : '#444')};
  background: ${p => (p.$active ? '#fff' : p.$color || 'transparent')};
  border-bottom: ${p => (p.$active ? '2px solid #217346' : 'none')};
  box-shadow: ${p => (p.$sep ? 'inset -1px 0 0 #b0b0b0' : 'none')};
  margin-bottom: ${p => (p.$active ? '0' : p.$color ? '3px' : '0')};
  font-size: 12.500px;
`;
const AddSheet = styled.div`
  margin-left: 33px;
  display: flex;
  align-items: center;
`;
const BarDots = styled.div`
  margin-left: auto;
  width: 17px;
  display: flex;
  align-items: center;
  color: #999;
  font-size: 14px;
`;
const HScroll = styled.div`
  width: 692px;
  margin: 7px 13px 6px 0;
  display: flex;
  border: 1px solid #c0c0c0;
  background: #e8e8e8;
`;
const HEnd = styled.div`
  width: 14px;
  background: #fff;
  border-right: 1px solid #c0c0c0;
  font-size: 9px;
  line-height: 12px;
  text-align: center;
  color: #444;
`;
const HThumb = styled.div`
  width: 640px;
  background: #fff;
  border-right: 1px solid #c0c0c0;
  margin-right: auto;
`;
const StatusBar = styled.div`
  height: 19px;
  background: #f1f1f1;
  display: flex;
  align-items: center;
  padding-left: 7px;
  color: #555;
  font-size: 11.800px;
  svg { flex: none; }
`;
const StatusText = styled.div`
  width: ${p => p.$w}px;
  flex: none;
  white-space: nowrap;
`;
const StatList = styled.div`
  margin-left: 868px;
  display: flex;
  flex: none;
`;
const ViewIcons = styled.div`
  display: flex;
  gap: 24px;
  flex: none;
`;
const ZoomBox = styled.div`
  margin-left: 22px;
  display: flex;
  align-items: center;
  gap: 3px;
  color: #888;
  flex: none;
  b { font-weight: 700; font-size: 13px; }
`;
const ZoomTrack = styled.i`
  display: block;
  width: 100px;
  height: 1px;
  background: #aaa;
`;
const ZoomPct = styled.span`
  margin-left: 14px;
  color: #999;
`;
const DialogBox = styled.div`
  position: absolute;
  left: 749px;
  top: 384px;
  width: 229px;
  height: 299px;
  background: #f0f0f0;
  border: 1px solid #7a7a7a;
  box-shadow: 0 2px 10px rgba(0, 0, 0, .35);
  display: flex;
  flex-direction: column;
  color: #222;
  font-size: 12px;
`;
const DialogTitle = styled.div`
  height: 31px;
  flex: none;
  background: #fff;
  display: flex;
  align-items: center;
  padding: 0 19px 3px 8px;
  font-size: 12px;
  color: #222;
`;
const TitleHelp = styled.span`
  margin-left: auto;
  margin-right: 35px;
  font-size: 13px;
`;
const DialogBody = styled.div`
  flex: 1;
  padding: 7px 7px 0 6px;
  display: flex;
  flex-direction: column;
`;
const Legend = styled.div`
  height: 18px;
  display: flex;
  align-items: center;
  gap: 5px;
  &::after {
    content: '';
    flex: 1;
    height: 1px;
    background: #dcdcdc;
  }
`;
const RadioRow = styled.div`
  position: relative;
  height: 25px;
  padding-left: 26px;
  display: flex;
  align-items: center;
  margin-top: ${p => (p.$checked ? '7px' : 0)};
  white-space: nowrap;
  &::before {
    content: '';
    position: absolute;
    left: 9px;
    top: 6px;
    width: 13px;
    height: 13px;
    border-radius: 50%;
    border: 1px solid #555;
    background: ${p => (p.$checked ? 'radial-gradient(circle, #333 0 3.500px, #fff 4px)' : '#fff')};
  }
`;
const Fields = styled.div`
  margin-top: 7px;
  display: flex;
  flex-direction: column;
  gap: 4px;
`;
const FieldRow = styled.div`
  height: 26px;
  display: flex;
  align-items: center;
`;
const FieldLabel = styled.div`
  width: 76px;
  color: ${p => (p.$off ? '#8a8a8a' : '#222')};
  white-space: nowrap;
`;
const FieldInput = styled.div`
  width: 137px;
  height: 26px;
  border: 1px solid #b4b4b4;
  background: #fff;
  display: flex;
`;
const FieldValue = styled.div`
  flex: 1;
  margin: ${p => (p.$off ? '3px 5px' : 0)};
  padding-left: 3px;
  background: ${p => (p.$off ? '#e6e6e6' : '#fff')};
  display: flex;
  align-items: center;
  font-size: 12.500px;
`;
const RefButton = styled.div`
  width: 21px;
  flex: none;
  background: #e3e3e3;
  border-left: 1px solid #c6c6c6;
  display: flex;
  align-items: center;
  justify-content: center;
`;
const CheckRow = styled.div`
  margin-top: 16px;
  display: flex;
  align-items: center;
  height: 21px;
  gap: 2px;
`;
const CheckBox = styled.div`
  width: 13px;
  height: 13px;
  border: 1px solid #444;
  background: #fff;
  display: flex;
  align-items: center;
  justify-content: center;
`;
const CheckLabel = styled.div`
  border: 1px dotted #333;
  padding: 0 1px;
  line-height: 19px;
  white-space: nowrap;
`;
const DialogButtons = styled.div`
  margin-top: 14px;
  display: flex;
  justify-content: flex-end;
  gap: 10px;
`;
const DialogButton = styled.div`
  width: 74px;
  height: 29px;
  display: flex;
  align-items: center;
  justify-content: center;
  background: ${p => (p.$primary ? '#e5f1fb' : '#e1e1e1')};
  border: 1px solid ${p => (p.$primary ? '#0078d7' : '#adadad')};
`;
const Pointer = styled.div`
  position: absolute;
  left: 114px;
  top: 281px;
`;
const ArrowLayer = styled.svg`
  position: absolute;
  left: 0;
  top: 0;
  pointer-events: none;
`;
const Mark = styled.div`
  position: absolute;
  left: 1664px;
  top: 986px;
  display: flex;
  gap: 2px;
  pointer-events: none;
`;
const MarkText = styled.div`
  display: flex;
  flex-direction: column;
  margin-top: -2px;
`;
const MarkName = styled.div`
  font-size: 21px;
  line-height: 26px;
  font-weight: 700;
  color: #4b95d1;
  white-space: nowrap;
`;
const MarkUrl = styled.div`
  font-size: 17.500px;
  line-height: 20px;
  margin-top: 2px;
  color: #79c77f;
  white-space: nowrap;
`;
